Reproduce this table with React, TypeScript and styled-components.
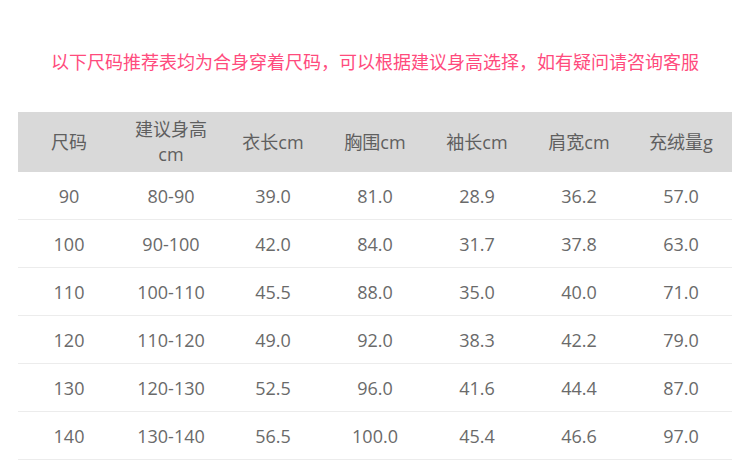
import React from 'react'
import styled, { createGlobalStyle } from 'styled-components'

const GlobalStyle = createGlobalStyle`
  body {
    margin: 0;
    background: #fff;
    font-family: 'Open Sans', 'Noto Sans CJK SC', sans-serif;
  }
`

const headers = ['尺码', '建议身高\ncm', '衣长cm', '胸围cm', '袖长cm', '肩宽cm', '充绒量g']

const rows = [
  ['90', '80-90', '39.0', '81.0', '28.9', '36.2', '57.0'],
  ['100', '90-100', '42.0', '84.0', '31.7', '37.8', '63.0'],
  ['110', '100-110', '45.5', '88.0', '35.0', '40.0', '71.0'],
  ['120', '110-120', '49.0', '92.0', '38.3', '42.2', '79.0'],
  ['130', '120-130', '52.5', '96.0', '41.6', '44.4', '87.0'],
  ['140', '130-140', '56.5', '100.0', '45.4', '46.6', '97.0']
]

const App: React.FC = () => {
  return (
    <Page>
      <GlobalStyle />
      <Notice>以下尺码推荐表均为合身穿着尺码，可以根据建议身高选择，如有疑问请咨询客服</Notice>
      <Table>
        <HeaderRow>
          {headers.map((h) => (
            <HeaderCell key={h}>
              {h.split('\n').map((line) => (
                <span key={line}>{line}</span>
              ))}
            </HeaderCell>
          ))}
        </HeaderRow>
        {rows.map((row) => (
          <Row key={row[0]}>
            {row.map((v, i) => (
              <Cell key={i}>{v}</Cell>
            ))}
          </Row>
        ))}
      </Table>
    </Page>
  )
}

const Page = styled.div`
  width: 750px;
  padding-top: 50px;
`

const Notice = styled.div`
  text-align: center;
  font-size: 18px;
  line-height: 24px;
  color: #ff4b7d;
  margin-bottom: 38px;
`

const Table = styled.div`
  margin: 0 18px;
  width: 714px;
`

const HeaderRow = styled.div`
  display: grid;
  grid-template-columns: repeat(7, 1fr);
  height: 60px;
  background: #d9d9d9;
`

const HeaderCell = styled.div`
  display: flex;
  flex-direction: column;
  align-items: center;
  justify-content: center;
  font-size: 18px;
  line-height: 25px;
  color: #5f5f5f;
`

const Row = styled.div`
  display: grid;
  grid-template-columns: repeat(7, 1fr);
  height: 48px;
  border-bottom: 1px solid #ececec;
  box-sizing: border-box;
`

const Cell = styled.div`
  display: flex;
  align-items: center;
  justify-content: center;
  font-size: 18px;
  color: #6a6a6a;
`

export default App
